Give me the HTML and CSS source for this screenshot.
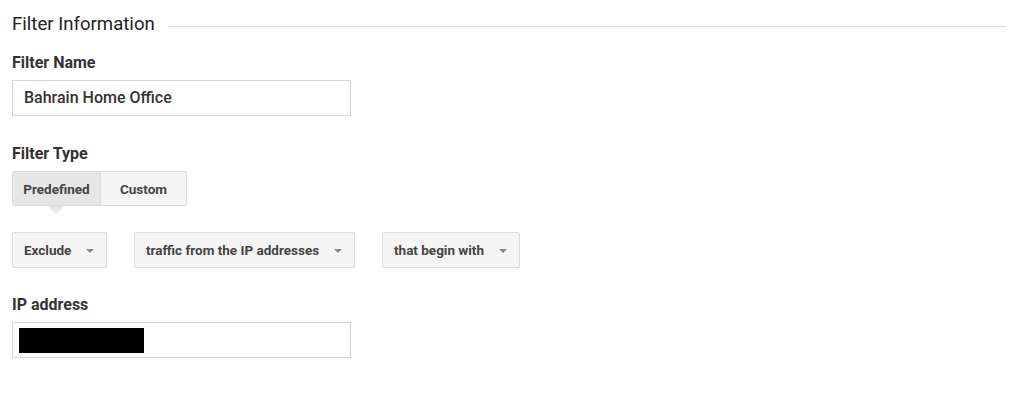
FILE: index.html
```html
<!DOCTYPE html>
<html>
<head>
<meta charset="utf-8">
<link rel="stylesheet" href="styles.css">
</head>
<body>
<div class="page">
  <div class="section-head">
    <h2 class="section-title">Filter Information</h2>
    <div class="section-rule"></div>
  </div>

  <div class="field field-name">
    <label class="field-label">Filter Name</label>
    <div class="text-input">Bahrain Home Office</div>
  </div>

  <div class="field field-type">
    <label class="field-label">Filter Type</label>
    <div class="toggle">
      <div class="toggle-btn active">Predefined</div>
      <div class="toggle-btn">Custom</div>
    </div>
  </div>

  <div class="selects">
    <div class="select sel-exclude">Exclude<span class="caret"></span></div>
    <div class="select sel-traffic">traffic from the IP addresses<span class="caret"></span></div>
    <div class="select sel-begin">that begin with<span class="caret"></span></div>
  </div>

  <div class="field field-ip">
    <label class="field-label">IP address</label>
    <div class="text-input ip-input"><span class="redact"></span></div>
  </div>
</div>
</body>
</html>
```

FILE: styles.css
```css
html, body {
  margin: 0;
  padding: 0;
  background: #fff;
}
body {
  font-family: Roboto, "Liberation Sans", Arial, sans-serif;
  color: #333;
}
.page {
  padding: 13px 18px 0 12px;
}
.section-head {
  display: flex;
  align-items: center;
  gap: 13px;
  height: 22px;
}
.section-title {
  margin: 0;
  font-size: 18.6px;
  font-weight: 400;
  color: #222;
  line-height: 22px;
}
.section-rule {
  flex: 1;
  height: 1px;
  background: #e0e0e0;
  margin-top: 5px;
}
.field-label {
  display: block;
  font-size: 16px;
  font-weight: 700;
  color: #333;
  line-height: 18px;
}
.field-name {
  margin-top: 19px;
}
.text-input {
  margin-top: 8px;
  height: 34px;
  border: 1px solid #d5d5d5;
  box-sizing: content-box;
  font-size: 16px;
  font-weight: 500;
  line-height: 34px;
  padding-left: 11px;
  width: 326px;
  color: #333;
}
.field-type {
  margin-top: 29px;
}
.toggle {
  margin-top: 8px;
  display: flex;
  width: 173px;
  height: 33px;
  border: 1px solid #dcdcdc;
  border-radius: 2px;
  background: #f5f5f5;
}
.toggle-btn {
  font-size: 13.5px;
  font-weight: 700;
  color: #444;
  line-height: 34px;
  text-align: center;
}
.toggle-btn:first-child {
  width: 87px;
  border-right: 1px solid #dcdcdc;
}
.toggle-btn:last-child {
  flex: 1;
}
.toggle-btn.active {
  background: #e6e6e6;
  position: relative;
}
.toggle-btn.active::after {
  content: "";
  position: absolute;
  left: 35px;
  top: 34px;
  width: 0;
  height: 0;
  border-left: 8px solid transparent;
  border-right: 8px solid transparent;
  border-top: 8px solid #e6e6e6;
}
.selects {
  margin-top: 26px;
  display: flex;
}
.select {
  height: 34px;
  border: 1px solid #dcdcdc;
  border-radius: 2px;
  background: #f5f5f5;
  font-size: 13.5px;
  font-weight: 700;
  color: #444;
  line-height: 35px;
  padding-left: 11px;
  box-sizing: content-box;
  position: relative;
}
.caret {
  position: absolute;
  right: 12px;
  top: 16px;
  width: 0;
  height: 0;
  border-left: 4px solid transparent;
  border-right: 4px solid transparent;
  border-top: 4px solid #888;
}
.sel-exclude { width: 82px; }
.sel-traffic { width: 208px; margin-left: 27px; }
.sel-begin { width: 125px; margin-left: 27px; }
.field-ip {
  margin-top: 28px;
}
.ip-input {
  display: flex;
  align-items: center;
  padding-left: 6px;
  width: 331px;
}
.redact {
  display: block;
  width: 125px;
  height: 25px;
  background: #000;
}
```
